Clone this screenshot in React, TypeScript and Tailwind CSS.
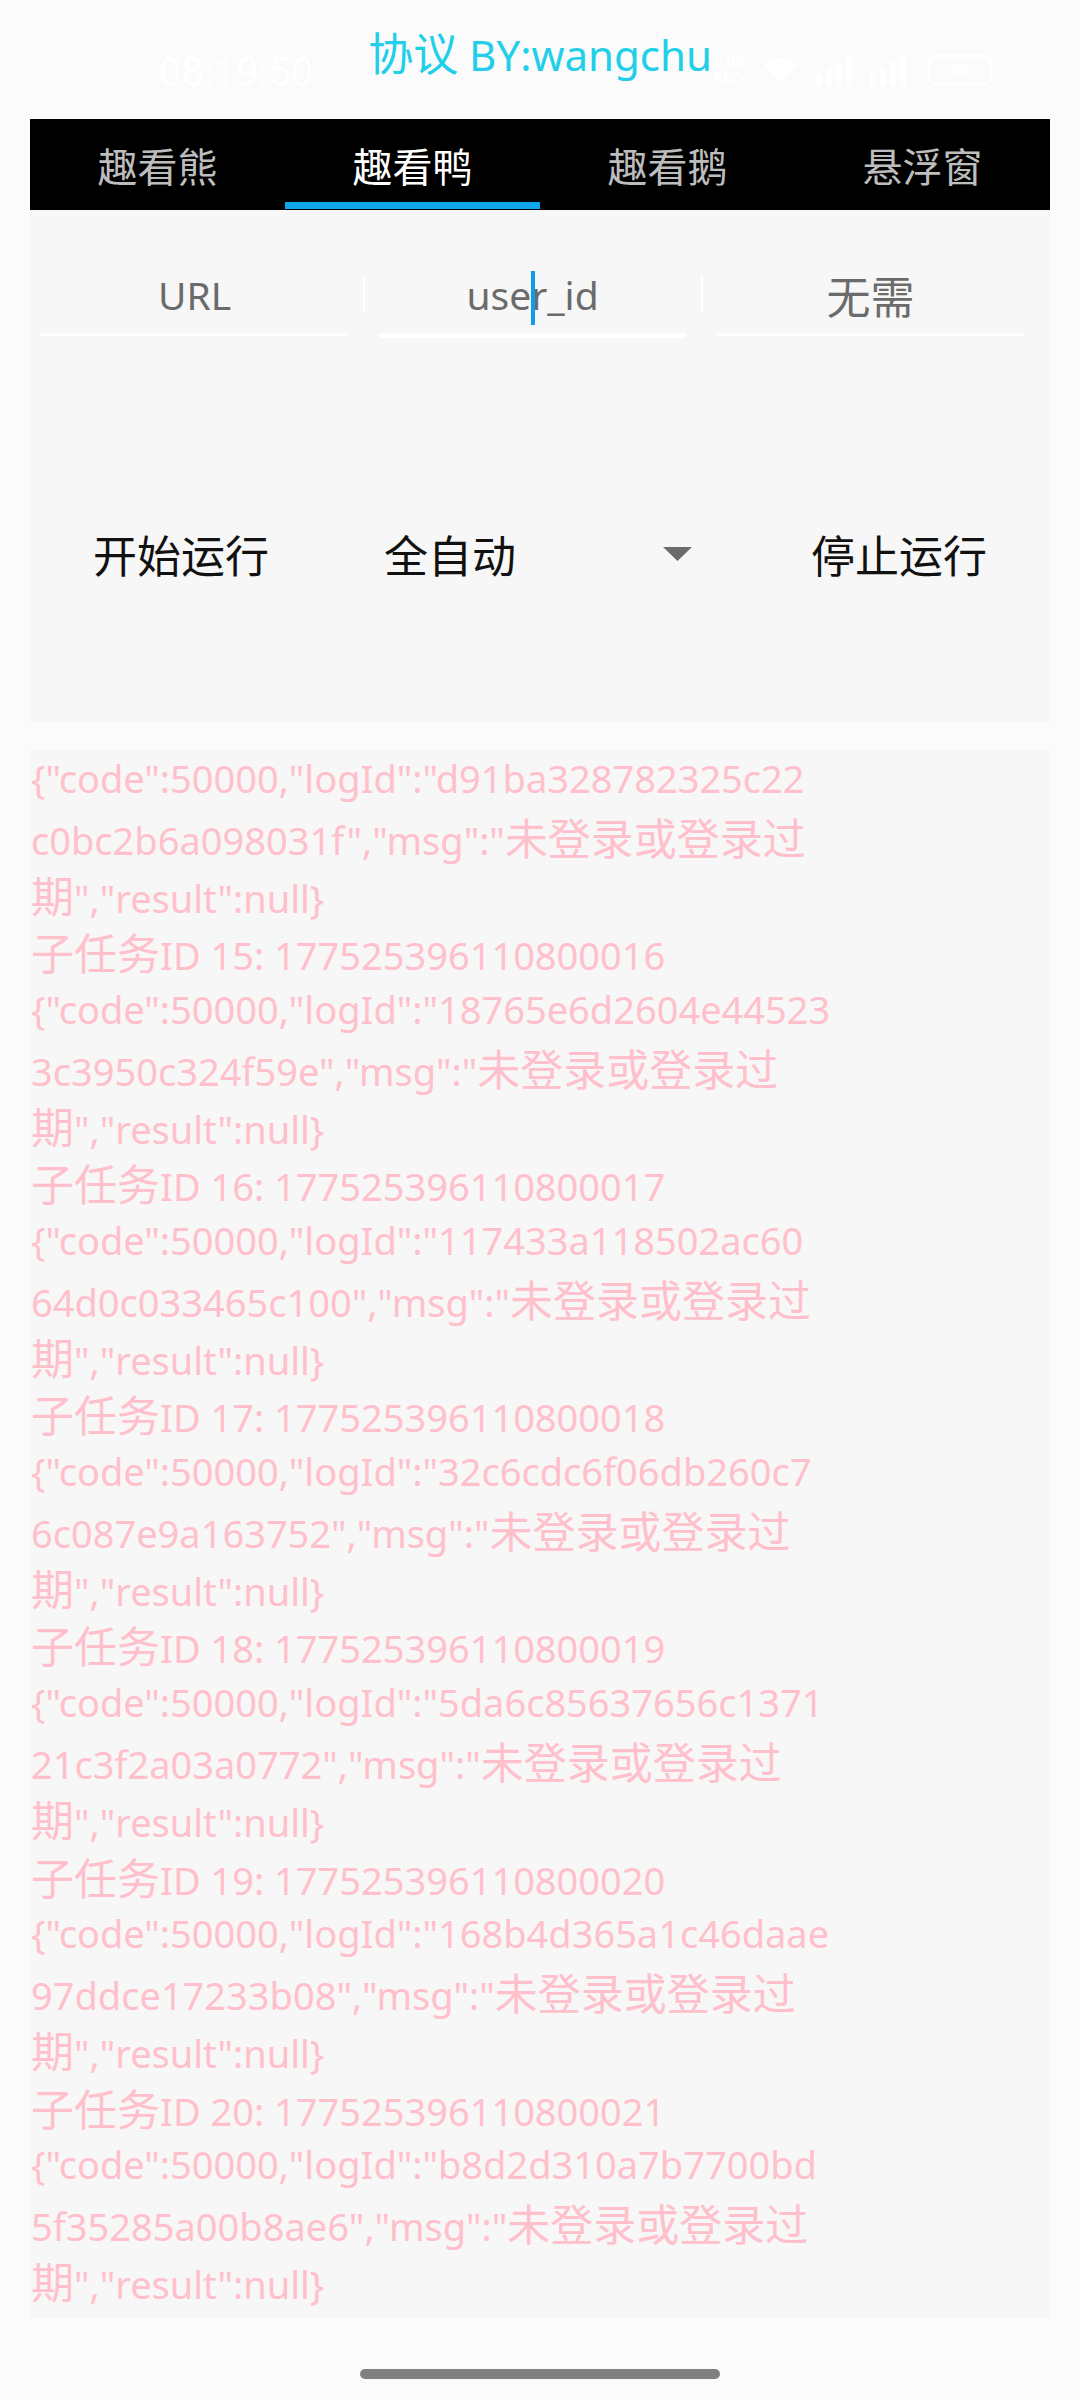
import { Fragment } from 'react'

const CJK = /([\u3400-\u9fff\uff00-\uffef]+)/

function Mixed({ text, cjk }: { text: string; cjk: string }) {
  return (
    <>
      {text.split(CJK).map((part, i) =>
        CJK.test(part) ? <span key={i} className={cjk}>{part}</span> : <Fragment key={i}>{part}</Fragment>
      )}
    </>
  )
}

const entries = [
  { id: 15, num: '177525396110800016', a: '18765e6d2604e44523', b: '3c3950c324f59e' },
  { id: 16, num: '177525396110800017', a: '117433a118502ac60', b: '64d0c033465c100' },
  { id: 17, num: '177525396110800018', a: '32c6cdc6f06db260c7', b: '6c087e9a163752' },
  { id: 18, num: '177525396110800019', a: '5da6c85637656c1371', b: '21c3f2a03a0772' },
  { id: 19, num: '177525396110800020', a: '168b4d365a1c46daae', b: '97ddce17233b08' },
  { id: 20, num: '177525396110800021', a: 'b8d2d310a7b7700bd', b: '5f35285a00b8ae6' },
]

const json = (a: string, b: string) => [
  `{"code":50000,"logId":"${a}`,
  `${b}","msg":"未登录或登录过`,
  '期","result":null}',
]

const logLines = [
  ...json('d91ba328782325c22', 'c0bc2b6a098031f'),
  ...entries.flatMap((e) => [`子任务ID ${e.id}: ${e.num}`, ...json(e.a, e.b)]),
]

const tabs = ['趣看熊', '趣看鸭', '趣看鹅', '悬浮窗']

function StatusBar() {
  return (
    <div className="absolute left-0 top-0 flex h-[119px] w-full items-center text-white">
      <span className="ml-[159px] mt-[26px] text-[40px] [font-family:'Roboto',sans-serif]">08:19:50</span>
      <div className="ml-auto mr-[88px] mt-[20px] flex items-center gap-[16px]">
        <div className="flex flex-col text-[15px] leading-[16px] font-bold [font-family:'Roboto',sans-serif]">
          <span>0.00</span>
          <span>KB/s</span>
        </div>
        <svg width="38" height="30" viewBox="0 0 38 30" fill="white">
          <path d="M19 28 L2 10 A24 24 0 0 1 36 10 Z" />
        </svg>
        <svg width="96" height="32" viewBox="0 0 96 32" fill="white">
          <rect x="0" y="20" width="6" height="12" />
          <rect x="10" y="14" width="6" height="18" />
          <rect x="20" y="8" width="6" height="24" />
          <rect x="30" y="2" width="6" height="30" />
          <rect x="54" y="20" width="6" height="12" />
          <rect x="64" y="14" width="6" height="18" />
          <rect x="74" y="8" width="6" height="24" />
          <rect x="84" y="2" width="6" height="30" />
        </svg>
        <div className="flex h-[32px] w-[64px] items-center justify-center rounded-[8px] border-[3px] border-white text-[16px] font-bold">
          66
        </div>
      </div>
    </div>
  )
}

export default function App() {
  return (
    <div className="relative h-[2400px] w-[1080px] overflow-hidden bg-[#fbfbfb] [font-family:'Noto_Sans','Noto_Sans_CJK_SC',sans-serif]">
      {/* header */}
      <div className="flex h-[119px] justify-center">
        <div className="mt-[24px] h-[60px] text-[42px] leading-[60px] text-[#22cfe9]">
          <Mixed text="协议 BY:wangchu" cjk="text-[45px]" />
        </div>
      </div>
      <StatusBar />

      {/* tabs */}
      <div className="mx-[30px] flex h-[91px] bg-black">
        {tabs.map((t, i) => (
          <div key={t} className="relative flex flex-1 items-center justify-center">
            <span className={`text-[40px] leading-[50px] [font-family:'Noto_Sans_CJK_SC',sans-serif] ${i === 1 ? 'text-white' : 'text-[#bdbdbd]'}`}>{t}</span>
            {i === 1 && <div className="absolute bottom-[1px] left-0 h-[7px] w-full bg-[#0ea5e9]" />}
          </div>
        ))}
      </div>

      {/* control panel */}
      <div className="mx-[30px] h-[512px] bg-[#f7f7f7] pt-[52px]">
        <div className="flex pl-[11px]">
          <div className="flex h-[74px] w-[307px] items-center justify-center border-b-[3px] border-white pb-[5px] text-[39px] text-[#6b6b6b]">
            URL
          </div>
          <div className="flex w-[31px] justify-center pt-[13px]">
            <div className="h-[37px] w-[2px] bg-white" />
          </div>
          <div className="relative flex h-[76px] w-[307px] items-center justify-center border-b-[5px] border-white pb-[5px] text-[39px] text-[#6b6b6b]">
            user_id
            <div className="absolute left-1/2 top-[9px] h-[54px] w-[4px] -translate-x-1/2 bg-[#109de6]" />
          </div>
          <div className="flex w-[31px] justify-center pt-[13px]">
            <div className="h-[37px] w-[2px] bg-white" />
          </div>
          <div className="flex h-[74px] w-[307px] items-center justify-center border-b-[3px] border-white pb-[5px] text-[44px] text-[#6b6b6b] [font-family:'Noto_Sans_CJK_SC',sans-serif]">
            无需
          </div>
        </div>

        <div className="mt-[186px] flex h-[60px] items-center pl-[10px] text-[44px] leading-[60px] text-[#111] [font-family:'Noto_Sans_CJK_SC',sans-serif]">
          <div className="flex w-[282px] justify-center">开始运行</div>
          <div className="ml-[62px] flex w-[308px] items-center justify-between">
            <span>全自动</span>
            <svg width="29" height="14" viewBox="0 0 29 14">
              <polygon points="0,0 29,0 14.5,14" fill="#6b6b6b" />
            </svg>
          </div>
          <div className="ml-[119px]">停止运行</div>
        </div>
      </div>

      {/* log */}
      <div className="mx-[30px] mt-[28px] bg-[#f7f7f7] pb-[8px] pl-[1px] text-[38px] text-[#ffc0cb]">
        {logLines.map((l, i) => (
          <div key={i} className="h-[57.78px] whitespace-nowrap leading-[57.78px]">
            <Mixed text={l} cjk="text-[43px] [font-family:'Noto_Sans_CJK_SC',sans-serif]" />
          </div>
        ))}
      </div>

      {/* home indicator */}
      <div className="absolute left-[360px] top-[2369px] h-[10px] w-[360px] rounded-full bg-[#808080]" />
    </div>
  )
}
